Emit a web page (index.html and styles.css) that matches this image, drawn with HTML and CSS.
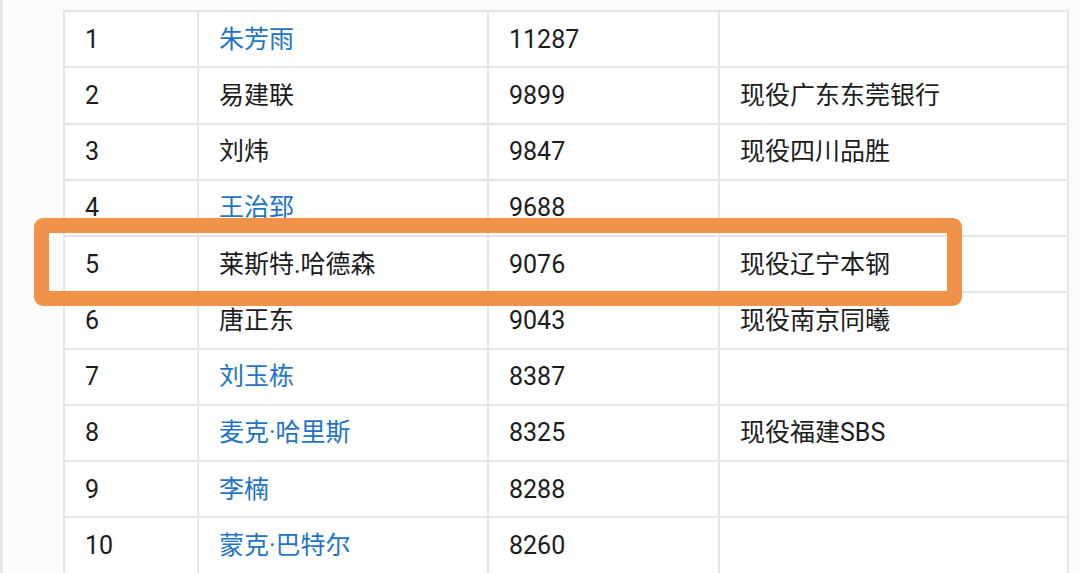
FILE: index.html
```html
<!DOCTYPE html>
<html lang="zh-CN">
<head>
<meta charset="utf-8">
<title>得分榜</title>
<link rel="stylesheet" href="styles.css">
</head>
<body>
<div class="page">
  <table class="rank">
    <colgroup>
      <col class="c-no"><col class="c-name"><col class="c-pts"><col class="c-note">
    </colgroup>
    <tbody>
      <tr><td>1</td><td><a class="link">朱芳雨</a></td><td>11287</td><td></td></tr>
      <tr><td>2</td><td>易建联</td><td>9899</td><td>现役广东东莞银行</td></tr>
      <tr><td>3</td><td>刘炜</td><td>9847</td><td>现役四川品胜</td></tr>
      <tr><td>4</td><td><a class="link">王治郅</a></td><td>9688</td><td></td></tr>
      <tr><td>5</td><td>莱斯特.哈德森</td><td>9076</td><td>现役辽宁本钢</td></tr>
      <tr><td>6</td><td>唐正东</td><td>9043</td><td>现役南京同曦</td></tr>
      <tr><td>7</td><td><a class="link">刘玉栋</a></td><td>8387</td><td></td></tr>
      <tr><td>8</td><td><a class="link">麦克·哈里斯</a></td><td>8325</td><td>现役福建SBS</td></tr>
      <tr><td>9</td><td><a class="link">李楠</a></td><td>8288</td><td></td></tr>
      <tr><td>10</td><td><a class="link">蒙克·巴特尔</a></td><td>8260</td><td></td></tr>
    </tbody>
  </table>
  <div class="highlight"></div>
</div>
</body>
</html>
```

FILE: styles.css
```css
html, body {
  margin: 0;
  padding: 0;
  background: #fcfcfc;
  overflow: hidden;
}

.page {
  position: relative;
  height: 573px;
  border-left: 3px solid #e8e8e8;
  padding: 10px 0 0 60px;
  box-sizing: border-box;
  font-family: Roboto, "Noto Sans CJK SC", sans-serif;
  font-size: 25px;
  color: #1c1c1c;
}

.rank {
  border-collapse: separate;
  border-spacing: 0;
  table-layout: fixed;
  width: 1006px;
  background: #ffffff;
  border-top: 2px solid #e6e6e6;
  border-left: 2px solid #e6e6e6;
}

.c-no { width: 134px; }
.c-name { width: 290px; }
.c-pts { width: 231px; }
.c-note { width: 349px; }

.rank td {
  height: 54.25px;
  padding: 0 0 0 20px;
  border-right: 2px solid #e6e6e6;
  border-bottom: 2px solid #e6e6e6;
  vertical-align: middle;
  white-space: nowrap;
  line-height: 1;
}

.link {
  color: #1f74c6;
  text-decoration: none;
}

.highlight {
  position: absolute;
  left: 31px;
  top: 218px;
  width: 928px;
  height: 88px;
  box-sizing: border-box;
  border: 15px solid #f1924b;
  border-radius: 9px;
}
```
